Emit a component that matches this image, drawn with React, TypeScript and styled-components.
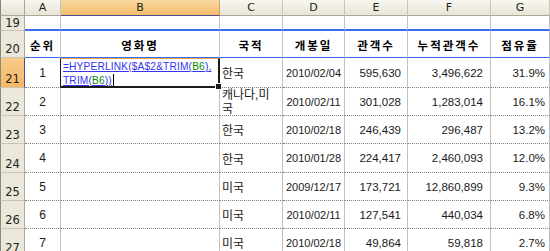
import React from "react";
import styled, { createGlobalStyle, css } from "styled-components";

const Global = createGlobalStyle`
  html, body { margin: 0; padding: 0; background: #fff; overflow: hidden; }
  body { font-family: "Liberation Sans", "Noto Sans CJK KR", sans-serif; }
`;

const Sheet = styled.div`
  display: grid;
  grid-template-columns: 25px 36px 159px 63px 62px 63px 83px 59px;
  grid-template-rows: 16px 15px 27px 30px 28px 28px 29px 28px 28px 28px;
  width: 550px;
  height: 251px;
  overflow: hidden;
  color: #000;
`;

const Corner = styled.div`
  box-sizing: border-box;
  background: linear-gradient(#f7f6f1, #e6e3d3);
  border-right: 1px solid #aca899;
  border-bottom: 1px solid #aca899;
  border-left: 1px solid #8a8878;
`;

const ColHeader = styled.div<{ $sel?: boolean }>`
  box-sizing: border-box;
  display: flex;
  align-items: center;
  justify-content: center;
  font: 11px "DejaVu Sans", sans-serif;
  color: #222;
  background: linear-gradient(#f7f6f1, #e8e5d6);
  border-right: 1px solid #c8c5b5;
  border-bottom: 1px solid #aca899;
  ${(p) =>
    p.$sel &&
    css`
      background: linear-gradient(#fad9a2, #f3bd6c);
      border-right-color: #d4a258;
      border-bottom: 1px solid #4b4b8f;
    `}
`;

const RowHeader = styled.div<{ $sel?: boolean; $mid?: boolean }>`
  box-sizing: border-box;
  display: flex;
  align-items: ${(p) => (p.$mid ? "center" : "flex-end")};
  justify-content: center;
  padding-bottom: ${(p) => (p.$mid ? "0" : "1px")};
  font: 11.5px "DejaVu Sans", sans-serif;
  color: #222;
  background: #ebe8d9;
  border-left: 1px solid #8a8878;
  border-right: 1px solid #aca899;
  border-bottom: 1px solid #c9c6b6;
  ${(p) =>
    p.$sel &&
    css`
      background: linear-gradient(#f8c98a, #f5b965);
      border-right: 1px solid #4b4b8f;
    `}
`;

type Align = "left" | "center" | "right";

const Cell = styled.div<{ $align?: Align; $pr?: number; $size?: number }>`
  box-sizing: border-box;
  display: flex;
  align-items: center;
  justify-content: ${(p) =>
    p.$align === "right" ? "flex-end" : p.$align === "center" ? "center" : "flex-start"};
  padding: 0 ${(p) => p.$pr ?? 2}px 0 2px;
  font: ${(p) => p.$size ?? 12}px "Liberation Sans", "Noto Sans CJK KR", sans-serif;
  color: #1a1a1a;
  white-space: nowrap;
  border-right: 1px solid #c0c0c0;
  border-bottom: 1px dotted #7a7a7a;
  overflow: hidden;
`;

const TopCell = styled(Cell)`
  border-bottom: 2px solid #3a6cf4;
`;

const HeadCell = styled(Cell)`
  justify-content: center;
  font: bold 11.5px "Noto Sans CJK KR", sans-serif;
  letter-spacing: 2px;
  color: #000;
  border-bottom: 1px solid #3a6cf4;
  padding-top: 2px;
`;

const WrapCell = styled(Cell)`
  white-space: normal;
  line-height: 14px;
  word-break: break-all;
`;

const EditCell = styled.div`
  box-sizing: border-box;
  position: relative;
  margin-left: -1px;
  border: 1px solid #1a1a1a;
  border-top: 1px solid #e2a63c;
  border-bottom: 2px solid #1a1a1a;
  border-right: 2px solid #1a1a1a;
  padding: 1px 0 0 2px;
  font: 10.2px "Liberation Sans", sans-serif;
  letter-spacing: 0.15px;
  line-height: 14px;
  background: #fff;
`;

const Ref = styled.span`
  color: #3535ee;
  text-decoration: underline;
`;

const Arg = styled.span`
  color: #0a8a0a;
  text-decoration: underline;
  text-decoration-color: #3535ee;
`;

const Caret = styled.span`
  display: inline-block;
  width: 1px;
  height: 13px;
  background: #000;
  vertical-align: -3px;
  margin-left: 1px;
`;

const Handle = styled.span`
  position: absolute;
  right: -4px;
  bottom: -4px;
  width: 5px;
  height: 5px;
  background: #1a1a1a;
  border: 1px solid #fff;
`;

type RowData = [string, string, string, string, string, string, string];

const rows: { n: string; d: RowData }[] = [
  { n: "22", d: ["2", "", "캐나다,미국", "2010/02/11", "301,028", "1,283,014", "16.1%"] },
  { n: "23", d: ["3", "", "한국", "2010/02/18", "246,439", "296,487", "13.2%"] },
  { n: "24", d: ["4", "", "한국", "2010/01/28", "224,417", "2,460,093", "12.0%"] },
  { n: "25", d: ["5", "", "미국", "2009/12/17", "173,721", "12,860,899", "9.3%"] },
  { n: "26", d: ["6", "", "미국", "2010/02/11", "127,541", "440,034", "6.8%"] },
  { n: "27", d: ["7", "", "미국", "2010/02/18", "49,864", "59,818", "2.7%"] },
];

const cols = ["A", "B", "C", "D", "E", "F", "G"];
const heads = ["순위", "영화명", "국적", "개봉일", "관객수", "누적관객수", "점유율"];

function DataRow({ n, d }: { n: string; d: RowData }) {
  return (
    <>
      <RowHeader>{n}</RowHeader>
      <Cell $align="center">{d[0]}</Cell>
      <Cell>{d[1]}</Cell>
      {d[2].length > 4 ? <WrapCell>{d[2]}</WrapCell> : <Cell>{d[2]}</Cell>}
      <Cell $align="center" $size={11}>{d[3]}</Cell>
      <Cell $align="right" $pr={6} $size={11.5}>{d[4]}</Cell>
      <Cell $align="right" $pr={7} $size={11.5}>{d[5]}</Cell>
      <Cell $align="right" $pr={4} $size={11.5}>{d[6]}</Cell>
    </>
  );
}

export default function App() {
  return (
    <>
      <Global />
      <Sheet>
        <Corner />
        {cols.map((c) => (
          <ColHeader key={c} $sel={c === "B"}>
            {c}
          </ColHeader>
        ))}

        <RowHeader $mid>19</RowHeader>
        {cols.map((c) => (
          <TopCell key={c} />
        ))}

        <RowHeader>20</RowHeader>
        {heads.map((h) => (
          <HeadCell key={h}>{h}</HeadCell>
        ))}

        <RowHeader $sel>21</RowHeader>
        <Cell $align="center">1</Cell>
        <EditCell>
          <Ref>=HYPERLINK($A$2&amp;TRIM(</Ref>
          <Arg>B6</Arg>
          <Ref>),</Ref>
          <br />
          <Ref>TRIM(</Ref>
          <Arg>B6</Arg>
          <Ref>))</Ref>
          <Caret />
          <Handle />
        </EditCell>
        <Cell>한국</Cell>
        <Cell $align="center" $size={11}>2010/02/04</Cell>
        <Cell $align="right" $pr={6} $size={11.5}>595,630</Cell>
        <Cell $align="right" $pr={7} $size={11.5}>3,496,622</Cell>
        <Cell $align="right" $pr={4} $size={11.5}>31.9%</Cell>

        {rows.map((r) => (
          <DataRow key={r.n} n={r.n} d={r.d} />
        ))}
      </Sheet>
    </>
  );
}
